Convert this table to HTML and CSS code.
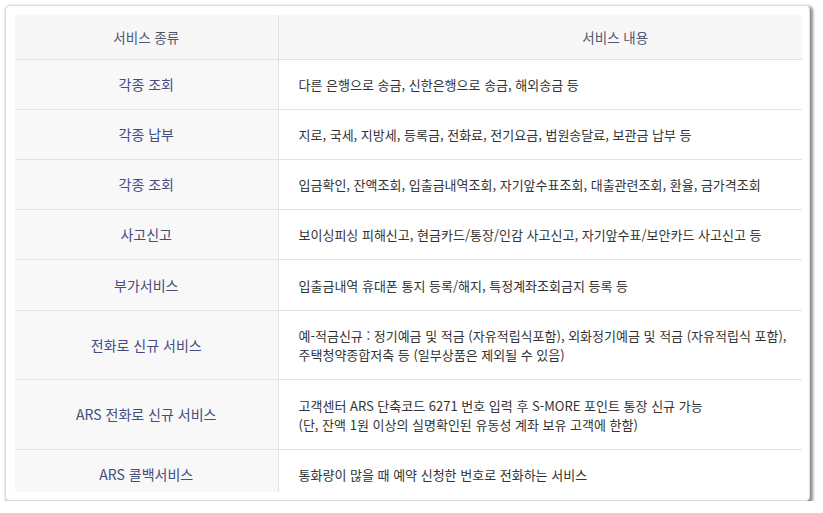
FILE: index.html
```html
<!DOCTYPE html>
<html lang="ko">
<head>
<meta charset="utf-8">
<link rel="stylesheet" href="styles.css">
</head>
<body>
<div class="card">
  <div class="viewport">
    <table class="svc">
      <colgroup><col class="c1"><col class="c2"></colgroup>
      <thead>
        <tr><th>서비스 종류</th><th>서비스 내용</th></tr>
      </thead>
      <tbody>
        <tr><th>각종 조회</th><td>다른 은행으로 송금, 신한은행으로 송금, 해외송금 등</td></tr>
        <tr><th>각종 납부</th><td>지로, 국세, 지방세, 등록금, 전화료, 전기요금, 법원송달료, 보관금 납부 등</td></tr>
        <tr><th>각종 조회</th><td>입금확인, 잔액조회, 입출금내역조회, 자기앞수표조회, 대출관련조회, 환율, 금가격조회</td></tr>
        <tr><th>사고신고</th><td>보이싱피싱 피해신고, 현금카드/통장/인감 사고신고, 자기앞수표/보안카드 사고신고 등</td></tr>
        <tr class="r5"><th>부가서비스</th><td>입출금내역 휴대폰 통지 등록/해지, 특정계좌조회금지 등록 등</td></tr>
        <tr class="tall"><th>전화로 신규 서비스</th><td>예-적금신규 : 정기예금 및 적금 (자유적립식포함), 외화정기예금 및 적금 (자유적립식 포함),<br>주택청약종합저축 등 (일부상품은 제외될 수 있음)</td></tr>
        <tr class="tall2"><th>ARS 전화로 신규 서비스</th><td>고객센터 ARS 단축코드 6271 번호 입력 후 S-MORE 포인트 통장 신규 가능<br>(단, 잔액 1원 이상의 실명확인된 유동성 계좌 보유 고객에 한함)</td></tr>
        <tr><th>ARS 콜백서비스</th><td>통화량이 많을 때 예약 신청한 번호로 전화하는 서비스</td></tr>
      </tbody>
    </table>
  </div>
</div>
</body>
</html>
```

FILE: styles.css
```css
html, body {
  margin: 0;
  padding: 0;
  background: #ffffff;
}
body {
  font-family: "Noto Sans CJK KR", "Noto Sans", sans-serif;
  font-size: 13px;
}
.card {
  margin: 5px 0 0 5px;
  width: 805px;
  height: 496px;
  box-sizing: border-box;
  border: 1px solid #dcdcdc;
  border-radius: 4px;
  padding: 9px;
  background: #ffffff;
  box-shadow: 2px 2px 3px 1px rgba(0, 0, 0, 0.45);
}
.viewport {
  width: 787px;
  height: 477px;
  overflow: hidden;
}
.svc {
  width: 937px;
  border-collapse: collapse;
  table-layout: fixed;
}
.svc col.c1 { width: 263px; }
.svc col.c2 { width: 674px; }
.svc th, .svc td {
  border-bottom: 1px solid #e2e2e2;
  font-weight: normal;
  line-height: 19px;
  padding: 0;
}
.svc thead th {
  height: 44px;
  background: #f7f7f7;
  color: #50566f;
  font-size: 13.5px;
  text-align: center;
}
.svc thead th:first-child {
  border-right: 1px solid #e2e2e2;
}
.svc tbody th {
  height: 49px;
  background: #f8f8f8;
  color: #434d80;
  font-size: 14px;
  text-align: center;
  border-right: 1px solid #e2e2e2;
}
.svc tbody td {
  color: #333333;
  padding-left: 20px;
  text-align: left;
}
.svc tbody tr.r5 th {
  height: 50px;
}
.svc tbody tr.tall th {
  height: 68px;
}
.svc tbody tr.tall2 th {
  height: 69px;
}
```
